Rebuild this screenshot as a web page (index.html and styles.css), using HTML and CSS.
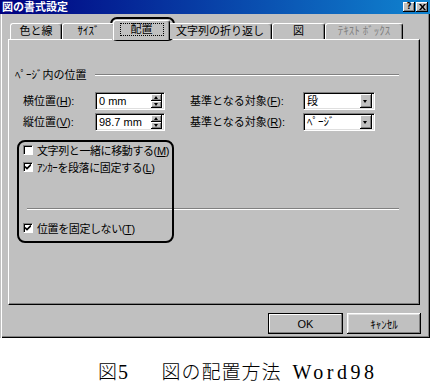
FILE: index.html
```html
<!DOCTYPE html>
<html lang="ja">
<head>
    <meta charset="UTF-8">
    <title>図の書式設定</title>
    <link rel="stylesheet" href="styles.css">
</head>
<body>
    <div class="dialog">
        <div class="titlebar">
            <span class="title">図の書式設定</span>
            <div class="tb-btns">
                <span class="tb-btn help">?</span>
                <span class="tb-btn">
                    <svg width="7" height="6" viewBox="0 0 7 6"><path d="M0 0h2l1.5 2 1.5-2h2l-2.5 3 2.5 3h-2l-1.5-2-1.5 2h-2l2.5-3z" fill="#000"/></svg>
                </span>
            </div>
        </div>
        <div class="tabs">
            <div class="tab t1">色と線</div>
            <div class="tab t2">ｻｲｽﾞ</div>
            <div class="tab t3 active"><span class="focus">配置</span></div>
            <div class="tab t4">文字列の折り返し</div>
            <div class="tab t5">図</div>
            <div class="tab t6 disabled">ﾃｷｽﾄ ﾎﾞｯｸｽ</div>
        </div>
        <div class="panel">
            <div class="group-head">
                <span>ﾍﾟｰｼﾞ内の位置</span>
                <div class="groove"></div>
            </div>
            <div class="pos-grid">
                <label>横位置(<u>H</u>):</label>
                <div class="field">
                    <span class="val">0 mm</span>
                    <div class="spin"><span class="up"></span><span class="dn"></span></div>
                </div>
                <label class="ref">基準となる対象(<u>F</u>):</label>
                <div class="field">
                    <span class="val">段</span>
                    <span class="drop"></span>
                </div>
                <label>縦位置(<u>V</u>):</label>
                <div class="field">
                    <span class="val">98.7 mm</span>
                    <div class="spin"><span class="up"></span><span class="dn"></span></div>
                </div>
                <label class="ref">基準となる対象(<u>R</u>):</label>
                <div class="field">
                    <span class="val">ﾍﾟｰｼﾞ</span>
                    <span class="drop"></span>
                </div>
            </div>
            <div class="checks">
                <div class="check"><span class="box"></span><span>文字列と一緒に移動する(<u>M</u>)</span></div>
                <div class="check"><span class="box on"></span><span>ｱﾝｶｰを段落に固定する(<u>L</u>)</span></div>
            </div>
            <div class="sep"></div>
            <div class="check last"><span class="box on"></span><span>位置を固定しない(<u>T</u>)</span></div>
        </div>
        <div class="actions">
            <button class="btn default">OK</button>
            <button class="btn">ｷｬﾝｾﾙ</button>
        </div>
        <div class="mark mark-tab"></div>
        <div class="mark mark-checks"></div>
    </div>
    <p class="caption"><span class="jp">図</span><span class="latin">5</span><span class="jp title-part">図の配置方法</span><span class="latin ver">Word98</span></p>
</body>
</html>
```

FILE: styles.css
```css
body {
    margin: 0;
    background: #ffffff;
    font-family: "Liberation Sans", "Noto Sans CJK JP", sans-serif;
}
.dialog {
    position: relative;
    width: 430px;
    height: 338px;
    background: #c0c0c0;
    box-shadow: inset 1px 0 #c0c0c0, inset 2px 0 #ffffff, inset -1px -1px #000000, inset -2px -2px #808080;
    font-size: 11px;
    color: #000;
}
.titlebar {
    height: 14px;
    display: flex;
    align-items: center;
    justify-content: space-between;
    background: linear-gradient(to right, #000080, #1084d0);
}
.title {
    color: #fff;
    font-weight: bold;
    font-size: 11px;
    line-height: 14px;
    padding-left: 2px;
}
.tb-btns {
    display: flex;
    gap: 1px;
    padding-right: 2px;
}
.tb-btn {
    width: 12px;
    height: 10px;
    display: flex;
    align-items: center;
    justify-content: center;
    background: #c0c0c0;
    box-shadow: inset -1px -1px #000, inset 1px 1px #fff, inset -2px -2px #808080;
    font-family: "DejaVu Sans", sans-serif;
    font-weight: bold;
    font-size: 8px;
    line-height: 10px;
}
.tabs {
    position: relative;
    z-index: 1;
    height: 25px;
    display: flex;
    align-items: flex-end;
    padding-left: 10px;
}
.tab {
    box-sizing: border-box;
    height: 16px;
    line-height: 14px;
    text-align: center;
    white-space: nowrap;
    background: #c0c0c0;
    border-top: 1px solid #fff;
    border-left: 1px solid #fff;
    border-right: 1px solid #000;
    border-radius: 3px 3px 0 0;
    box-shadow: inset -1px 0 #808080;
}
.t1 { width: 52px; }
.t2 { width: 53px; }
.t3 { width: 57px; margin: 0 -2px -1px; }
.t4 { width: 104px; }
.t5 { width: 53px; }
.t6 { width: 78px; }
.tab.active {
    position: relative;
    height: 20px;
    line-height: 17px;
}
.tab.disabled {
    color: #808080;
}
.focus {
    display: inline-block;
    padding: 0 10px;
    line-height: 11px;
    outline: 1px dotted #000;
}
.panel {
    box-sizing: border-box;
    width: 412px;
    height: 266px;
    margin-left: 8px;
    padding: 29px 20px 0 6px;
    border: 1px solid;
    border-color: #fff #000 #000 #fff;
    box-shadow: inset -1px -1px #808080;
}
.group-head {
    display: flex;
    align-items: center;
    gap: 8px;
    height: 12px;
    line-height: 12px;
}
.groove {
    flex: 1;
    height: 0;
    border-top: 1px solid #808080;
    border-bottom: 1px solid #fff;
}
.pos-grid {
    display: grid;
    grid-template-columns: 72px 70px 138px 72px;
    grid-template-rows: 18px 18px;
    row-gap: 3px;
    margin-top: 11px;
    padding-left: 8px;
    align-items: center;
}
.pos-grid label {
    line-height: 14px;
}
.pos-grid .ref {
    padding-left: 25px;
}
.field {
    box-sizing: border-box;
    height: 18px;
    display: flex;
    align-items: center;
    justify-content: space-between;
    background: #fff;
    border: 1px solid;
    border-color: #808080 #fff #fff #808080;
    box-shadow: inset 1px 1px #000, inset -1px -1px #dfdfdf;
    padding: 2px 2px 2px 3px;
}
.val {
    line-height: 12px;
    white-space: nowrap;
}
.spin {
    display: flex;
    flex-direction: column;
    width: 11px;
    height: 14px;
}
.spin span, .drop {
    position: relative;
    display: block;
    background: #c0c0c0;
    box-shadow: inset -1px -1px #000, inset 1px 1px #fff, inset -2px -2px #808080;
}
.spin span {
    height: 7px;
}
.spin .up::after, .spin .dn::after, .drop::after {
    content: "";
    position: absolute;
    left: 3px;
    border-left: 2.5px solid transparent;
    border-right: 2.5px solid transparent;
}
.spin .up::after {
    top: 2px;
    border-bottom: 3px solid #000;
}
.spin .dn::after {
    top: 2px;
    border-top: 3px solid #000;
}
.drop {
    width: 12px;
    height: 14px;
}
.drop::after {
    top: 6px;
    border-top: 3px solid #000;
}
.checks {
    display: flex;
    flex-direction: column;
    gap: 3px;
    margin-top: 12px;
}
.check {
    display: flex;
    align-items: center;
    gap: 4px;
    height: 14px;
    padding-left: 8px;
    white-space: nowrap;
    letter-spacing: -0.4px;
}
.check.last {
    margin-top: 11px;
}
.box {
    box-sizing: border-box;
    position: relative;
    width: 10px;
    height: 10px;
    background: #fff;
    border: 1px solid;
    border-color: #808080 #fff #fff #808080;
    box-shadow: inset 1px 1px #000;
}
.box.on::after {
    content: "";
    position: absolute;
    left: 1px;
    top: 1px;
    width: 6px;
    height: 6px;
    background: no-repeat center/6px 6px url("data:image/svg+xml,%3Csvg xmlns='http://www.w3.org/2000/svg' viewBox='0 0 6 6'%3E%3Cpath d='M0 2.5l2 2 4-4' fill='none' stroke='%23000' stroke-width='1.6'/%3E%3C/svg%3E");
}
.sep {
    margin: 34px 0 0 12px;
    border-top: 1px solid #808080;
    border-bottom: 1px solid #fff;
}
.actions {
    display: flex;
    justify-content: flex-end;
    gap: 4px;
    margin-top: 8px;
    padding-right: 9px;
}
.btn {
    box-sizing: border-box;
    width: 74px;
    height: 21px;
    padding: 0;
    font: inherit;
    font-size: 11px;
    color: #000;
    background: #c0c0c0;
    border: none;
    box-shadow: inset -1px -1px #000, inset 1px 1px #fff, inset -2px -2px #808080, inset 2px 2px #dfdfdf;
}
.btn.default {
    width: 75px;
    box-shadow: inset 0 0 0 1px #000, inset -2px -2px #808080, inset 2px 2px #fff;
}
.mark {
    position: absolute;
    box-sizing: border-box;
    border: 2px solid #000;
    pointer-events: none;
}
.mark-tab {
    left: 110px;
    top: 17px;
    width: 65px;
    height: 24px;
    border-radius: 7px;
}
.mark-checks {
    left: 17px;
    top: 140px;
    width: 157px;
    height: 103px;
    border-radius: 8px;
}
.caption {
    margin: 21px 0 0;
    padding-left: 98px;
    height: 24px;
    line-height: 24px;
    white-space: nowrap;
    color: #000;
}
.caption .jp {
    font-family: "Noto Sans CJK JP", sans-serif;
    font-size: 19px;
    font-weight: 300;
    letter-spacing: 1px;
}
.caption .latin {
    font-family: "Liberation Serif", serif;
    font-size: 20px;
    letter-spacing: 3.5px;
}
.caption .title-part {
    margin-left: 30px;
}
.caption .ver {
    margin-left: 11px;
}
```
